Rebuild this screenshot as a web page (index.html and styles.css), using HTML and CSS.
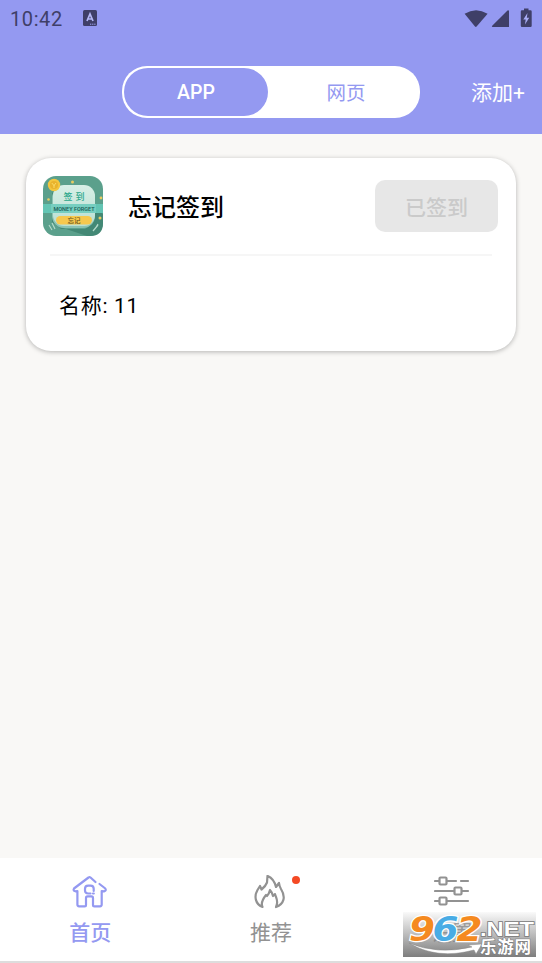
FILE: index.html
```
<!DOCTYPE html>
<html lang="zh-CN">
<head>
<meta charset="utf-8">
<title>忘记签到</title>
<link rel="stylesheet" href="styles.css">
</head>
<body>
<header class="header">
  <div class="status">
    <span class="clock">10:42</span>
    <svg class="ime" viewBox="0 0 14 16"><rect width="14" height="16" rx="1.5" fill="#3f3f68"/><path d="M4 11 7 4l3 7M5.2 9h3.6" fill="none" stroke="#b4b8f6" stroke-width="1.7"/><path d="M7 14.2h6" stroke="#9fa4f0" stroke-dasharray="1.3 .8"/></svg>
    <svg class="signals" viewBox="0 0 70 22"><g fill="#3f3f68"><path d="M.6 5.8Q12 -1.2 23.6 5.8L12.6 18.5q-.8.9-1.6 0Z"/><path d="M45 3v16H28.5q-1.2-.3-.3-1.3L43.500 2.400q1.200-.7 1.500.6Z"/><path d="M60 .4h4.500v1.800h2q1.200 0 1.200 1.200v14.400q0 1.200-1.200 1.200h-8.500q-1.200 0-1.200-1.200V3.400q0-1.200 1.200-1.200h2Z"/></g><path d="m63.500 5-4.200 6.500h2.400L61 16.500l4.200-6.700h-2.400Z" fill="#a8acf5"/></svg>
  </div>
  <div class="toolbar">
    <div class="switch"><span class="tab selected">APP</span><span class="tab">网页</span></div>
    <span class="add">添加+</span>
  </div>
</header>
<main class="content">
  <section class="card">
    <div class="card-head">
      <svg class="app-icon" viewBox="0 0 60 60">
        <defs><linearGradient id="panel" x2="0" y2="1"><stop stop-color="#d8efe6"/><stop offset="1" stop-color="#b9dfd3"/></linearGradient></defs>
        <rect width="60" height="60" rx="13" fill="#5ba08c"/>
        <path d="M9 17 14 12v38l30 10h3q13 0 13-13v-9L50 29v18L42 53H18L9 46Z" fill="#438875"/>
        <path d="M0 28h60v9H0Z" fill="#63c5b4"/>
        <rect x="9" y="10" width="43" height="42" rx="12" fill="#8bc3b3"/>
        <rect x="10" y="9" width="42" height="41" rx="11" fill="url(#panel)"/>
        <path d="M8 28h45v9H8Z" fill="#76cec0"/>
        <circle cx="11" cy="9" r="6.200" fill="#f3c63e"/><circle cx="11" cy="9" r="4" fill="#e9b32d"/><path d="m8.800 7 2.200 2.600L13 7m-2 2v3" stroke="#f9dc69" fill="none"/>
        <g fill="#e8cc61"><circle cx="29.500" cy="6" r="1.500"/><circle cx="5.500" cy="23.500" r="1.300"/><circle cx="58" cy="22" r="1.400"/><circle cx="57" cy="42" r="1.500"/></g>
        <rect x="13" y="40" width="36" height="8.500" rx="4.200" fill="#f6c84e"/>
        <path d="m6 49 3 5m0-7 3 6m40 0 3-5m-5 7 5-6" stroke="#b3d9ca" stroke-width="1.200"/>
        <text x="20.500" y="23.500" class="i-title">签</text><text x="32.500" y="23.500" class="i-title">到</text>
        <text x="10.500" y="34.500" class="i-name" textLength="41" lengthAdjust="spacingAndGlyphs">MONEY FORGET</text>
        <text x="31" y="46.700" class="i-sub" text-anchor="middle">忘记</text>
      </svg>
      <h1 class="title">忘记签到</h1>
      <button class="done" disabled>已签到</button>
    </div>
    <p class="detail">名称: 11</p>
  </section>
</main>
<nav class="nav">
  <a class="nav-item active">
    <svg class="nav-icon" viewBox="0 0 36 34"><path d="M23.500 7 18.500 2.500q-1-.8-2 0L2 13.500q-1.300 2 1.400 2.800l2-.2v13.500q0 1.700 1.700 1.700h5.500q1.400 0 1.400-1.400v-7q0-1.500 1.500-1.500h4q1.500 0 1.500 1.500v7q0 1.400 1.400 1.400H28q1.700 0 1.700-1.700V16.100l2.700.2q2.200-.8.900-2.800L27.500 9M21 18.500h.8M18.500 18.500h-2.300q-3.200 0-3.200-3v-1.700q0-3.200 3.200-3.200h2.300q3.200 0 3.200 3.200V16"/></svg>
    <span>首页</span>
  </a>
  <a class="nav-item">
    <svg class="nav-icon" viewBox="0 0 36 34"><path d="M9.500 32C2 29 1 21 4.500 15l2.500-4 1.500 3.500q4-3 5.500-7L14.500.900Q21 3.500 23 12L26 8q.3 3 2 6c5 8 3 15-5 18 3-6 0-9-1-13l-2 2q-1-4-3-6-1 4-3 6l-1-1c-4 5-5 9-3.500 12Z"/></svg>
    <i class="dot"></i>
    <span>推荐</span>
  </a>
  <a class="nav-item">
    <svg class="nav-icon" viewBox="0 0 36 34"><path d="M1 6h4m8 0h9m5 0h7M1 16h19m8 0h6M1 26h4m8 0h21"/><rect x="5.500" y="2.500" width="7" height="7" rx="1"/><rect x="20.500" y="12.500" width="7" height="7" rx="1"/><rect x="5.500" y="22.500" width="7" height="7" rx="1"/></svg>
    <span class="covered">设置</span>
  </a>
  <svg class="watermark" viewBox="0 0 133 45">
    <defs><linearGradient id="shade" x2="0" y2="1"><stop stop-color="#777" stop-opacity=".04"/><stop offset="1" stop-color="#777" stop-opacity=".95"/></linearGradient></defs>
    <rect width="133" height="45" fill="url(#shade)"/>
    <path d="M6 31q28 12 63 4l-4-2 14-1-6 10-2-4Q34 48 6 31Z" fill="#fff" stroke="#888" stroke-width=".5"/>
    <g class="digits"><text x="6" y="29" textLength="26" lengthAdjust="spacingAndGlyphs" fill="#f58a20">9</text><text x="29.500" y="29" textLength="26" lengthAdjust="spacingAndGlyphs" fill="#49ace5">6</text><text x="53.500" y="29" textLength="26" lengthAdjust="spacingAndGlyphs" fill="#f58a20">2</text></g>
    <text x="77" y="24" class="net" textLength="54" lengthAdjust="spacingAndGlyphs">.NET</text>
    <text x="77" y="41" class="site" textLength="51">乐游网</text>
  </svg>
</nav>
</body>
</html>
```
FILE: styles.css
```
* { box-sizing: border-box; }
body {
  margin: 0;
  height: 963px;
  display: flex;
  flex-direction: column;
  overflow: hidden;
  background: #f9f8f6;
  color: #000;
  font-family: Roboto, "Noto Sans CJK SC", sans-serif;
}
.header { height: 134px; background: #9499f1; }
.status { height: 38px; padding: 0 9px 0 10px; display: flex; align-items: center; }
.clock { font-size: 20px; letter-spacing: .6px; color: #3f3f68; width: 73px; }
.ime { width: 14px; height: 16px; margin-bottom: 2px; }
.signals { width: 70px; height: 22px; margin-left: auto; margin-right: -1px; margin-bottom: 1px; }
.toolbar { height: 108px; margin-top: -1px; display: flex; padding: 29px 17px 0 122px; }
.switch { width: 298px; height: 52px; padding: 2px; border-radius: 25px; background: #fff; display: flex; }
.tab { width: 144px; flex: none; display: flex; align-items: center; justify-content: center; font-size: 19.500px; color: #9499f1; }
.tab.selected { border-radius: 24px; background: #9499f1; color: #fff; font-weight: 500; }
.tab:last-child { padding: 0 0 2px 13px; width: 143px; }
.add { margin-left: auto; height: 52px; line-height: 54px; font-size: 21px; color: #fff; }
.content { flex: 1; padding: 24px 26px; }
.card { height: 193px; border-radius: 25px; background: #fff; box-shadow: 0 1px 5px #00000047; }
.card-head { height: 98px; margin: 0 24px; border-bottom: 2px solid #f6f6f6; display: flex; align-items: center; }
.app-icon { width: 60px; height: 60px; flex: none; margin-left: -7px; }
.i-title { font: 500 9px "Noto Sans CJK SC", sans-serif; fill: #29a68a; }
.i-name { font: 500 6px Roboto, sans-serif; fill: #165b54; }
.i-sub { font: 500 6.500px "Noto Sans CJK SC", sans-serif; fill: #68531b; }
.title { margin: 4px 0 0 25px; font-size: 24px; font-weight: 500; line-height: 36px; }
.done { width: 123px; height: 52px; margin: 0 -6px 0 auto; padding: 0 0 1px; border: 0; border-radius: 10px; background: #e7e7e7; color: #cacaca; font: 500 21px "Noto Sans CJK SC", sans-serif; }
.detail { margin: 35px 0 0 33px; font-size: 21px; line-height: 30px; letter-spacing: .7px; }
.nav { position: relative; height: 105px; background: #fff; border-bottom: 2px solid #ddd; display: flex; }
.nav-item { position: relative; flex: 1; display: flex; flex-direction: column; align-items: center; padding-top: 17px; color: #929292; font-size: 21px; line-height: 30px; }
.nav-item span { margin-top: 9px; }
.nav-item .covered { color: #aaa; }
.nav-icon { width: 36px; height: 34px; fill: none; stroke: currentColor; stroke-width: 2.200; stroke-linejoin: round; stroke-linecap: round; }
.active { color: #9499f1; font-weight: 500; }
.dot { position: absolute; left: 111px; top: 18px; width: 8px; height: 8px; border-radius: 50%; background: #f44a24; }
.watermark { position: absolute; left: 403px; top: 54px; width: 133px; height: 45px; }
.digits { font: italic 700 33px "DejaVu Sans", sans-serif; stroke: #fff; stroke-width: 2.500px; paint-order: stroke; }
.net { font: 700 20px "Liberation Sans", sans-serif; fill: #fff; stroke: #777; stroke-width: 1.500px; paint-order: stroke; }
.site { font: 700 16.500px "Noto Sans CJK SC", sans-serif; fill: #fff; stroke: #777; stroke-width: 1px; paint-order: stroke; }
```
